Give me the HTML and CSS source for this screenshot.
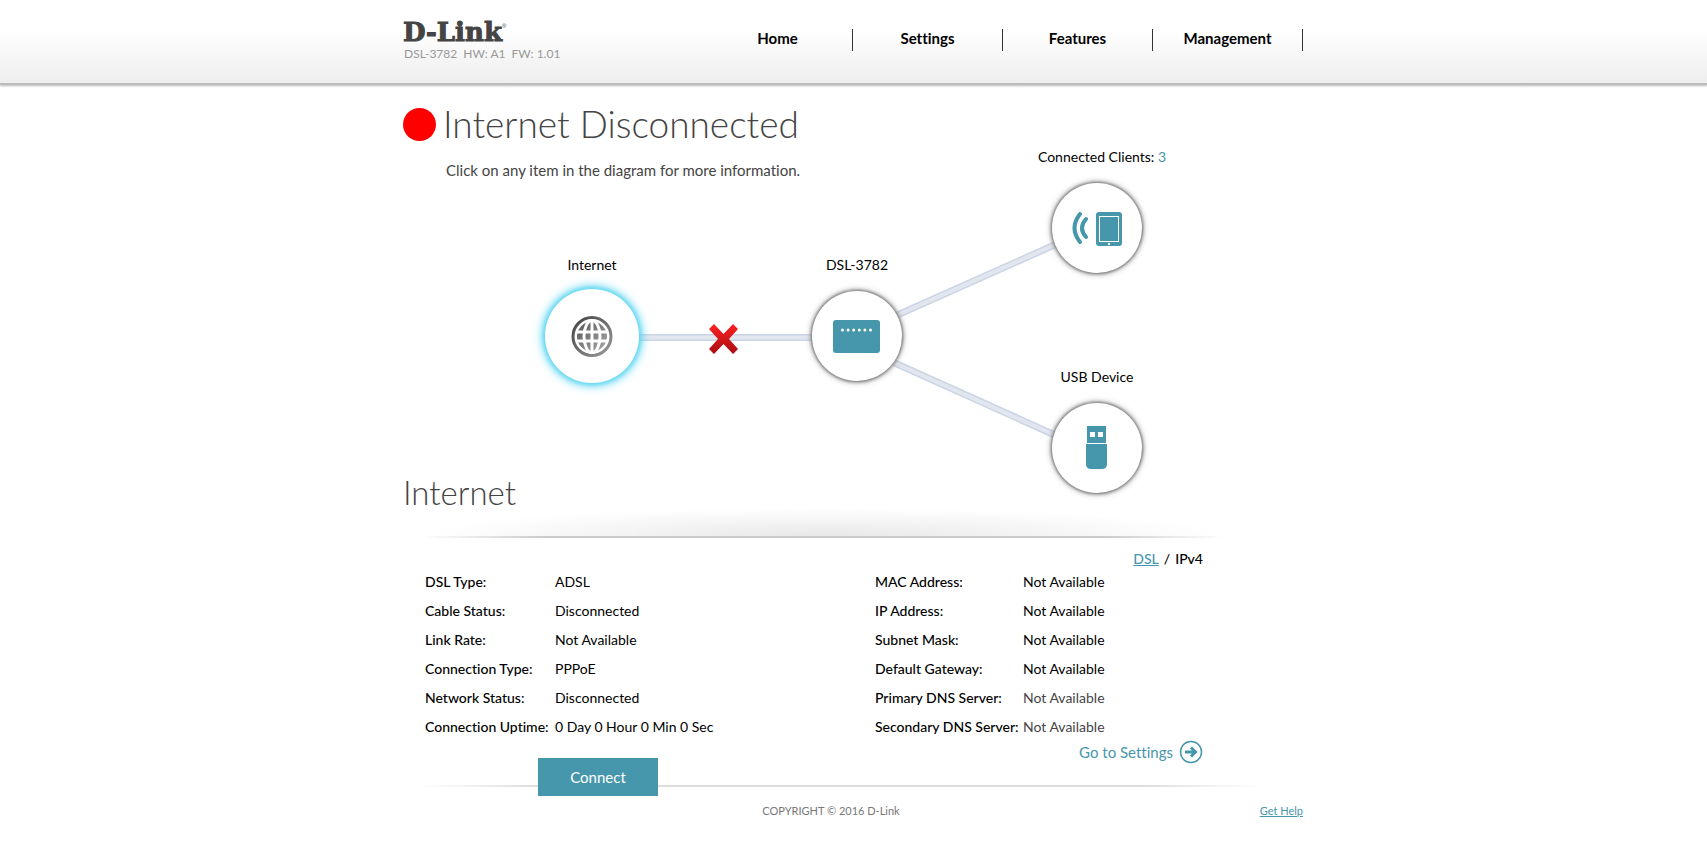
FILE: index.html
```html
<!DOCTYPE html>
<html lang="en">
<head>
	<meta charset="UTF-8">
	<title>D-Link DSL-3782</title>
	<link rel="stylesheet" href="styles.css">
</head>
<body>
	<header class="header">
		<div class="wrap header-inner">
			<div class="brand">
				<a href="#" class="logo">D-Link<sup>®</sup></a>
				<p class="version"><span>DSL-3782</span><span>HW: A1</span><span>FW: 1.01</span></p>
			</div>
			<nav class="nav">
				<a href="#">Home</a>
				<a href="#">Settings</a>
				<a href="#">Features</a>
				<a href="#">Management</a>
			</nav>
		</div>
	</header>

	<main class="wrap">
		<section class="status">
			<div class="status-text">
				<h1><span class="dot"></span>Internet Disconnected</h1>
				<p>Click on any item in the diagram for more information.</p>
			</div>
			<div class="diagram">
				<svg class="links" width="900" height="410" viewBox="0 0 900 410">
					<g fill="none" stroke="#cad5e5" stroke-width="7">
						<path d="M188 252.5H454M454 248L694 141M454 261L694 369"/>
					</g>
					<g fill="none" stroke="#e2e6ef" stroke-width="4">
						<path d="M188 252.5H454M454 248L694 141M454 261L694 369"/>
					</g>
				</svg>
				<svg class="cross" width="30" height="30" viewBox="0 0 30 30">
					<defs>
						<linearGradient id="red" x1="0" y1="0" x2="0" y2="1">
							<stop offset="0" stop-color="#ff2020"/>
							<stop offset="1" stop-color="#a80d12"/>
						</linearGradient>
					</defs>
					<path fill="url(#red)" d="M5 0L14.5 10L24 0L29 5L20 15L29 25L24 30L14.5 20L5 30L0 25L9 15L0 5Z"/>
				</svg>

				<a href="#" class="node node-internet active">
					<span class="label">Internet</span>
					<span class="circle">
						<svg width="42" height="42" viewBox="0 0 42 42">
							<defs>
								<linearGradient id="grey" x1="0" y1="0" x2="1" y2="1">
									<stop offset="0" stop-color="#444"/>
									<stop offset="1" stop-color="#999"/>
								</linearGradient>
								<linearGradient id="land" x1="0" y1="0" x2="1" y2="1">
									<stop offset="0" stop-color="#555"/>
									<stop offset="1" stop-color="#aaa"/>
								</linearGradient>
							</defs>
							<circle cx="21" cy="21.5" r="19" fill="#fff" stroke="url(#grey)" stroke-width="3"/>
							<circle cx="21" cy="21.5" r="15" fill="url(#land)"/>
							<g fill="none" stroke="#fff" stroke-width="3">
								<path d="M21 5V37M6 17H36M6 26H36"/>
								<ellipse cx="21" cy="21.5" rx="8" ry="16"/>
							</g>
						</svg>
					</span>
				</a>
				<a href="#" class="node node-router">
					<span class="label">DSL-3782</span>
					<span class="circle">
						<svg width="48" height="34" viewBox="0 0 48 34">
							<rect width="47" height="33" x="0" y="1" rx="3" fill="#4697ab"/>
							<path d="M9.5 11H39" stroke="#fff" stroke-width="3" stroke-linecap="round" stroke-dasharray="0 5.6"/>
						</svg>
					</span>
				</a>
				<a href="#" class="node node-clients">
					<span class="label">Connected Clients: <em>3</em></span>
					<span class="circle">
						<svg width="50" height="36" viewBox="0 0 50 36">
							<g fill="none" stroke="#4697ab" stroke-width="4" stroke-linecap="round">
								<path d="M8 4Q-3 18 8 32M14 9Q6 18 14 27"/>
							</g>
							<rect x="24" y="2" width="26" height="34" rx="3" fill="#4697ab"/>
							<rect x="27.5" y="6.5" width="19" height="25" fill="none" stroke="#fff"/>
							<circle cx="37" cy="34" r="1.2" fill="#fff"/>
						</svg>
					</span>
				</a>
				<a href="#" class="node node-usb">
					<span class="label">USB Device</span>
					<span class="circle">
						<svg width="22" height="44" viewBox="0 0 22 44">
							<path fill="#4697ab" fill-rule="evenodd" d="M1 0H20V17H1ZM4 6V11H9V6ZM12 6V11H17V6Z"/>
							<path fill="#4697ab" d="M0 18H21V38Q21 43 16 43H5Q0 43 0 38Z"/>
						</svg>
					</span>
				</a>
			</div>
		</section>

		<section class="info">
			<h2>Internet</h2>
			<div class="divider"></div>
			<p class="switch"><a href="#">DSL</a><span>/</span>IPv4</p>
			<div class="columns">
				<div class="column">
					<table>
						<tr><th scope="row">DSL Type:</th><td>ADSL</td></tr>
						<tr><th scope="row">Cable Status:</th><td>Disconnected</td></tr>
						<tr><th scope="row">Link Rate:</th><td>Not Available</td></tr>
						<tr><th scope="row">Connection Type:</th><td>PPPoE</td></tr>
						<tr><th scope="row">Network Status:</th><td>Disconnected</td></tr>
						<tr><th scope="row">Connection Uptime:</th><td>0 Day 0 Hour 0 Min 0 Sec</td></tr>
					</table>
					<button type="button" class="connect">Connect</button>
				</div>
				<div class="column column-right">
					<table>
						<tr><th scope="row">MAC Address:</th><td>Not Available</td></tr>
						<tr><th scope="row">IP Address:</th><td>Not Available</td></tr>
						<tr><th scope="row">Subnet Mask:</th><td>Not Available</td></tr>
						<tr><th scope="row">Default Gateway:</th><td>Not Available</td></tr>
						<tr><th scope="row">Primary DNS Server:</th><td class="dim">Not Available</td></tr>
						<tr><th scope="row">Secondary DNS Server:</th><td class="dim">Not Available</td></tr>
					</table>
					<a href="#" class="goto">Go to Settings
						<svg width="24" height="24" viewBox="0 0 24 24" fill="none" stroke="#4697ab">
							<circle cx="12" cy="12" r="10.5" stroke-width="1.5"/>
							<path d="M6 12H17M12 7.5L16.5 12L12 16.5" stroke-width="3"/>
						</svg>
					</a>
				</div>
			</div>
		</section>
	</main>

	<footer class="wrap footer">
		<span class="copyright">COPYRIGHT © 2016 D-Link</span>
		<a href="#">Get Help</a>
	</footer>
</body>
</html>
```
FILE: styles.css
```css
body,h1,h2,p{margin: 0;padding: 0;}
body{background-color: #fff;color: #000;font-family: Lato,"Open Sans",sans-serif;font-size: 14px;line-height: 20px;font-variant-ligatures: none;}
a{color: #4697ab;}
svg{display: block;}
.wrap{max-width: 900px;margin: 0 auto;padding-right: 1px;}

/* header */
.header{background: linear-gradient(#fff 35%,#eee);border-bottom: 2px solid #bbb;box-shadow: 0 1px 2px #bbb;}
.header-inner{display: flex;justify-content: space-between;height: 83px;}
.brand{padding-top: 17px;}
.logo{display: block;color: #444;font: bold 26px/30px "DejaVu Serif",serif;text-decoration: none;-webkit-text-stroke: 1px #444;}
.logo sup{font: 6px/6px "Liberation Sans",sans-serif;vertical-align: 13px;-webkit-text-stroke: 0;}
.version{display: flex;gap: 6px;padding-left: 1px;font-size: 12px;line-height: 14px;color: #999;}
.nav{display: flex;padding-top: 29px;}
.nav a{width: 149px;height: 22px;border-right: 1px solid #333;color: #000;font-size: 15px;font-weight: bold;line-height: 18px;text-align: center;text-decoration: none;}

/* status and diagram */
.status{display: grid;}
.status-text,.diagram{grid-area: 1/1;}
.status-text{padding-top: 17px;color: #444;}
h1{display: flex;align-items: center;gap: 7px;font-size: 37px;line-height: 44px;font-weight: 300;}
.dot{width: 33px;height: 33px;border-radius: 50%;background-color: #f00;}
.status-text p{padding: 14px 0 0 43px;font-size: 15px;line-height: 20px;}
.diagram{position: relative;height: 387px;}
.links{position: absolute;left: 0;top: 0;}
.cross{position: absolute;left: 306px;top: 239px;}
.node{position: absolute;width: 160px;color: #000;text-align: center;text-decoration: none;}
.node em{color: #4697ab;font-style: normal;}
.label{display: block;}
.circle{display: flex;align-items: center;justify-content: center;width: 90px;height: 90px;margin: 16px auto 0;border-radius: 50%;background-color: #fff;box-shadow: 0 0 3px 1px #777,0 0 6px 1px #aaa;}
.active .circle{width: 94px;height: 94px;margin-top: 14px;box-shadow: 0 0 4px 1px #5fd6f2,0 0 10px 3px #5fd6f2;}
.node-internet{left: 109px;top: 170px;}
.node-router{left: 374px;top: 170px;}
.node-clients{left: 614px;top: 62px;}
.node-clients .label{padding-left: 10px;}
.node-usb{left: 614px;top: 282px;}

/* details */
h2{font-size: 33px;line-height: 32px;padding-top: 4px;font-weight: 300;color: #444;}
.divider{height: 28px;margin: 0 78px 0 20px;border-bottom: 2px solid;border-image: linear-gradient(90deg,transparent,#ccc 15%,#ccc 85%,transparent) 1;background: radial-gradient(50% 100% at 50% 100%,#e8e8e8,transparent);}
.switch{display: flex;justify-content: flex-end;gap: 5px;margin: 13px 100px 0 0;line-height: 16px;font-weight: 500;}
.columns{display: grid;grid-template-columns: 450px 1fr;padding: 0 100px 0 22px;}
table{border-collapse: collapse;}
th,td{height: 29px;padding: 0;text-align: left;}
th{width: 130px;font-weight: 500;white-space: nowrap;}
.column-right th{width: 148px;}
.dim{color: #444;}
.connect{position: relative;z-index: 1;display: block;width: 120px;height: 38px;margin: 17px 0 0 113px;border: 0;background-color: #4697ab;color: #fff;font-family: inherit;font-size: 15px;}
.goto{display: flex;align-items: center;justify-content: flex-end;gap: 6px;height: 22px;font-size: 15px;text-decoration: none;}

.footer{display: flex;justify-content: flex-end;gap: 360px;margin-top: -11px;padding-top: 16px;background: linear-gradient(90deg,transparent 2%,#ddd 15%,#ddd 82%,transparent 95%) no-repeat 0 0/100% 2px;font-size: 11px;color: #777;}
```
